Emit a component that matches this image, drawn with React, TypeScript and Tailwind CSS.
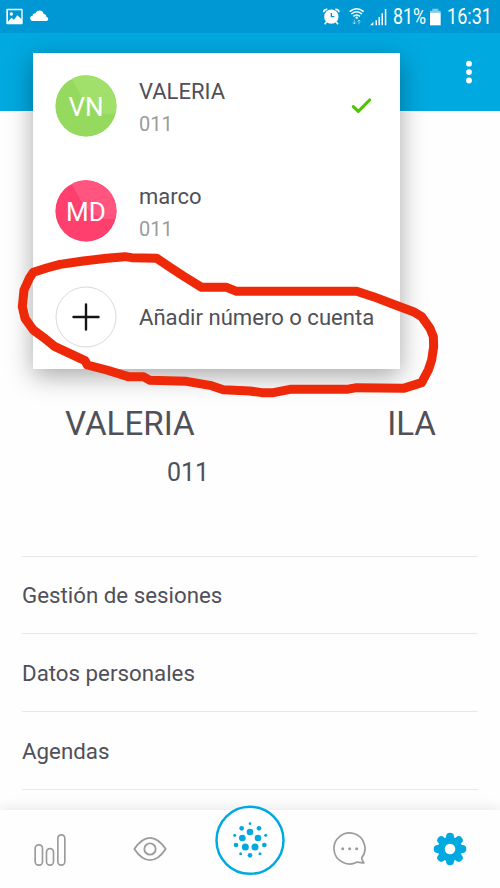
import { useState } from "react";

const accounts = [
  { initials: "VN", name: "VALERIA", phone: "011", bg: "text-[#96d95f]", shine: "#a2e06c" },
  { initials: "MD", name: "marco", phone: "011", bg: "text-[#ff406e]", shine: "#ff557e" },
];

const settings = ["Gestión de sesiones", "Datos personales", "Agendas"];

function StatusBar() {
  return (
    <div className="flex h-[33px] items-center bg-[#0098d4] pr-[9px] pl-[6px] text-white">
      <svg className="h-5 w-[17px]" viewBox="18 20 51 60" fill="currentColor">
        <path
          fillRule="evenodd"
          d="M22 25h43a3 3 0 0 1 3 3v41a3 3 0 0 1-3 3H22a3 3 0 0 1-3-3V28a3 3 0 0 1 3-3zM24 30v34l10-12 8 6 10-13 12 11V30z"
        />
        <circle cx="34" cy="41" r="5" />
      </svg>
      <svg className="ml-[7px] h-5 w-[19px]" viewBox="90 20 57 60" fill="currentColor">
        <path d="M99 62a8 8 0 0 1-1-16c0-6 5-8 9-7 3-11 22-12 24 2 5 0 8 3 8 8 8 2 8 13-2 13z" />
      </svg>

      <div className="ml-auto flex items-center">
        <svg className="h-5 w-[17px]" viewBox="68 20 51 60" fill="currentColor">
          <circle cx="93" cy="49" r="21.500" />
          <path d="M79 64l-6 8M107 64l6 8" stroke="currentColor" strokeWidth="5" />
          <path d="M70 36c0-6 4-9 11-9M116 36c0-6-4-9-11-9" fill="none" stroke="currentColor" strokeWidth="5" />
          <path d="M93 38v11h9" fill="none" stroke="#0098d4" strokeWidth="4" />
        </svg>
        <svg className="ml-[9px] h-5 w-4" viewBox="146 20 48 60" fill="none" stroke="currentColor" strokeWidth="4.500">
          <path d="M148 34q21-18 42 0M153 41q16-14 32 0M159 48q10-8 20 0" />
          <circle cx="169" cy="52" r="3.500" fill="currentColor" stroke="none" />
          <path d="M162 58v13M157 66l5 5 5-5M176 72V59M171 64l5-5 5 5" strokeWidth="3" opacity=".5" />
        </svg>
        <svg className="ml-[5px] h-5 w-[17px]" viewBox="209 20 51 60" fill="currentColor">
          <path d="M209 75l10-10v10zM225.500 60h4.500v15h-4.500zM234.500 50h4.500v25h-4.500zM243.500 39h4.500v36h-4.500zM253.500 26h4.500v49h-4.500z" />
        </svg>
        <span className="ml-[6px] w-9 origin-left scale-x-[.83] text-[21.5px] leading-none whitespace-nowrap">81%</span>
        <svg className="ml-[1px] h-5 w-[11px]" viewBox="390 20 33 60" fill="currentColor">
          <path d="M397 25h18v6h7v6h-32v-6h7z" opacity=".5" />
          <path d="M390 37h32v38h-32z" />
        </svg>
        <span className="ml-[6px] w-[44px] origin-left scale-x-[.84] text-[21.5px] leading-none whitespace-nowrap">16:31</span>
      </div>
    </div>
  );
}

function AccountMenu() {
  const [selected, setSelected] = useState(0);

  return (
    <div className="absolute top-[53px] left-[33px] h-[316px] w-[367px] bg-white shadow-[0_7px_24px_rgba(0,0,0,.34)]">
      {accounts.map((account, i) => (
        <button
          key={account.initials}
          onClick={() => setSelected(i)}
          className="flex h-[105.5px] w-full items-center pl-[22px] text-left"
        >
          <span className="relative flex size-[62px] items-center justify-center overflow-hidden rounded-full">
            <svg className={`absolute inset-0 size-[62px] ${account.bg}`} viewBox="0 0 62 62">
              <circle cx="31" cy="31" r="30.7" fill="currentColor" />
              <path d="M17 4C21 1 26 .3 31 .3A30.700 30.700 0 0 1 60.500 38C54 40 47 39 40 35C31 30 24 18 17 4z" fill={account.shine} />
            </svg>
            <span className="relative top-px text-[26px] leading-none text-white">{account.initials}</span>
          </span>
          <span className="ml-[22px] flex flex-1 flex-col pt-1">
            <span className="text-[22px] leading-[33px] text-[#505058]">{account.name}</span>
            <span className="text-[20px] leading-[33px] text-[#9b9b9b]">{account.phone}</span>
          </span>
          {selected === i && (
            <svg className="mr-[27px] h-[18px] w-[22px]" viewBox="156 289 66 54" fill="none">
              <path d="M163 318l15 14 34-34" stroke="#4fc400" strokeWidth="9.500" strokeLinecap="round" strokeLinejoin="round" />
            </svg>
          )}
        </button>
      ))}
      <button className="flex h-[105px] w-full items-center pl-[22px]">
        <svg className="size-[62px]" viewBox="0 0 62 62" fill="none">
          <circle cx="31" cy="31" r="30" stroke="#dadada" />
          <path d="M31 18.5v25M18.5 31h25" stroke="#151515" strokeWidth="2.4" strokeLinecap="round" />
        </svg>
        <span className="ml-[22px] pt-0.5 text-[22.1px] whitespace-nowrap text-[#505058]">Añadir número o cuenta</span>
      </button>
    </div>
  );
}

// Hand-drawn marker around the "add account" row
function Marker() {
  return (
    <svg className="pointer-events-none absolute top-[240px] left-0 h-[160px] w-[500px]" viewBox="0 0 1500 480" fill="none">
      <path
        d="M395 53L375 50L320 55L250 63L180 73L140 84L100 97L88 115L72 150L67 200L75 235L100 270L130 292L165 320L255 362L262 375L320 390L385 410L430 410L450 421L560 424L630 436L670 449L750 453L785 458L820 458L870 448L1040 448L1070 443L1210 445L1265 428L1285 390L1295 360L1301 320L1300 290L1290 265L1265 230L1240 215L1180 193L1120 170L1070 154L710 154L680 142L605 142L550 108L510 82L470 55Z"
        stroke="#ed2909"
        strokeWidth="27"
        strokeLinejoin="round"
      />
    </svg>
  );
}

function BottomNav() {
  return (
    <nav className="grid h-[78px] shrink-0 grid-cols-5 items-center justify-items-center bg-[#fefefe] text-[#9b9b9b] shadow-[0_-2px_12px_rgba(0,0,0,.09)]">
      <svg className="size-9" viewBox="96 108 108 108" fill="none" stroke="currentColor" strokeWidth="5">
        <rect x="105.500" y="149.500" width="22" height="61" rx="10" />
        <rect x="139.500" y="161" width="21" height="49.500" rx="10" />
        <rect x="173.500" y="119.500" width="21" height="91" rx="10" />
      </svg>
      <svg className="size-9" viewBox="396 108 108 108" fill="none" stroke="currentColor" strokeWidth="5.500" strokeLinejoin="round">
        <path d="M403 162C411 150 428 128.500 450 128.500S489 150 497 162C489 174 472 195.500 450 195.500S411 174 403 162z" />
        <circle cx="450" cy="162" r="17" />
      </svg>
      <svg className="-mt-1.5 size-[72px] self-start text-[#00a9e0]" viewBox="27 13 216 216" fill="currentColor">
        <circle cx="135" cy="122" r="100.500" fill="#fff" stroke="currentColor" strokeWidth="7.500" />
        <circle cx="135" cy="97" r="10" />
        <circle cx="112" cy="115" r="10" />
        <circle cx="159" cy="115" r="10" />
        <circle cx="121" cy="142" r="10.500" />
        <circle cx="150" cy="142" r="10.500" />
        <circle cx="110" cy="86" r="7" />
        <circle cx="162" cy="86" r="7" />
        <circle cx="93" cy="136" r="7" />
        <circle cx="178" cy="136" r="7" />
        <circle cx="135" cy="167" r="7" />
        <circle cx="135" cy="72" r="4" />
        <circle cx="89" cy="107" r="4.500" />
        <circle cx="182" cy="107" r="4.500" />
        <circle cx="107" cy="162" r="4.500" />
        <circle cx="165" cy="162" r="4.500" />
      </svg>
      <svg className="size-9" viewBox="246 108 108 108" fill="none" stroke="currentColor" strokeWidth="5" strokeLinejoin="round">
        <path d="M335 189A46.500 46.500 0 1 0 320 201.500C327 201 336 204 342 204C337 199 336 194 335 189z" />
        <g fill="currentColor" stroke="none">
          <circle cx="278" cy="161" r="4.500" />
          <circle cx="299" cy="161" r="4.500" />
          <circle cx="320" cy="161" r="4.500" />
        </g>
      </svg>
      <svg className="size-9 text-[#00a9e0]" viewBox="546 108 108 108" fill="currentColor">
        <circle cx="600" cy="162" r="37" />
        {[0, 45, 90, 135, 180, 225, 270, 315].map((deg) => (
          <circle key={deg} cx="600" cy="125" r="12" transform={`rotate(${deg} 600 162)`} />
        ))}
        <circle cx="600" cy="162" r="16" fill="#fff" />
      </svg>
    </nav>
  );
}

export default function App() {
  return (
    <div className="relative flex h-[888px] w-[500px] flex-col overflow-hidden bg-[#fefefe] font-['Roboto',sans-serif] text-[#505058]">
      <StatusBar />
      <header className="flex h-[78px] items-center justify-end bg-[#00a9e0] pr-[27px] text-white">
        <svg className="h-6 w-2" viewBox="0 0 8 24" fill="currentColor">
          <circle cx="4" cy="3.700" r="2.900" />
          <circle cx="4" cy="12.100" r="2.900" />
          <circle cx="4" cy="20.500" r="2.900" />
        </svg>
      </header>

      <main className="flex flex-1 flex-col">
        <div className="mt-[291px] flex justify-between pr-[64px] pl-[65px] text-[33.2px] leading-[44px]">
          <span>VALERIA</span>
          <span>ILA</span>
        </div>
        <p className="mt-[10px] pl-[167px] text-[25px] leading-[34px]">011</p>
        <ul className="mx-[22px] mt-[65.5px] border-b border-[#e8e8e8]">
          {settings.map((item) => (
            <li key={item} className="flex h-[77.8px] items-center border-t border-[#e8e8e8] pt-0.5 text-[22.3px]">
              {item}
            </li>
          ))}
        </ul>
      </main>

      <BottomNav />
      <AccountMenu />
      <Marker />
    </div>
  );
}
